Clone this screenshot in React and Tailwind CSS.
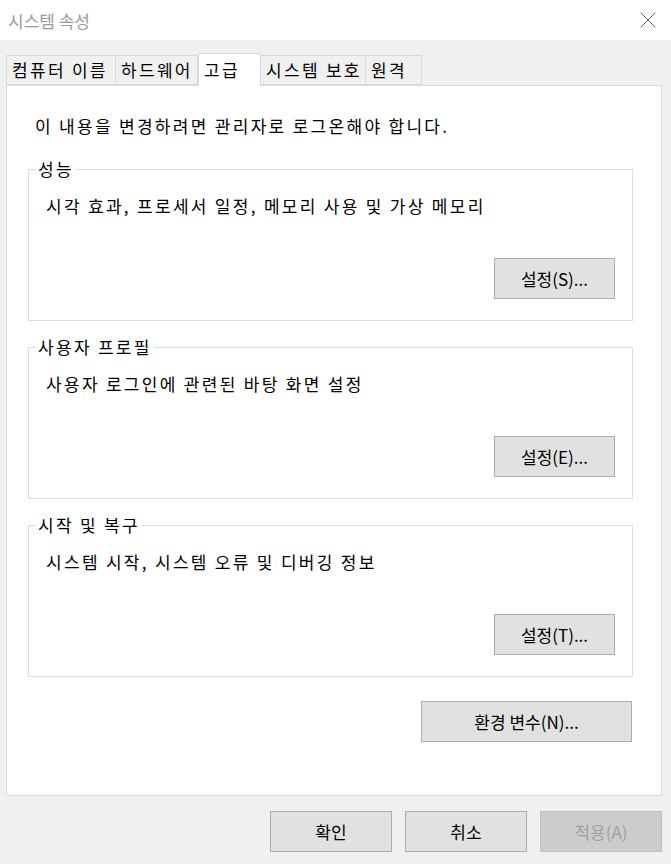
import React from 'react';

const font = { fontFamily: '"Noto Sans CJK KR", "Noto Sans", sans-serif' };

const tabs = [
  { label: '컴퓨터 이름', w: 'w-[110px]' },
  { label: '하드웨어', w: 'w-[83px]' },
  { label: '고급', w: 'w-[63px]', active: true },
  { label: '시스템 보호', w: 'w-[106px]' },
  { label: '원격', w: 'w-[57px]' },
];

const groups = [
  { title: '성능', desc: '시각 효과, 프로세서 일정, 메모리 사용 및 가상 메모리', btn: '설정(S)...' },
  { title: '사용자 프로필', desc: '사용자 로그인에 관련된 바탕 화면 설정', btn: '설정(E)...' },
  { title: '시작 및 복구', desc: '시스템 시작, 시스템 오류 및 디버깅 정보', btn: '설정(T)...' },
];

function Button({ children, className = '', disabled }) {
  return (
    <div
      className={
        'flex items-center justify-center h-[41px] border text-[17px] ' +
        (disabled
          ? 'bg-[#cccccc] border-[#bfbfbf] text-[#a0a0a0] '
          : 'bg-[#e1e1e1] border-[#adadad] text-black ') +
        className
      }
    >
      {children}
    </div>
  );
}

function GroupBox({ title, desc, btn }) {
  return (
    <div className="relative h-[152px] border border-[#dcdcdc] flex flex-col">
      {/* caption sits over the top border, like a legend */}
      <span className="absolute -top-[13px] left-[7px] bg-white px-[2px] leading-[24px] text-[17px] tracking-[2.3px] text-black">
        {title}
      </span>
      <p className="pl-[17px] pt-[24px] leading-[24px] text-[17px] tracking-[2.3px] text-black">{desc}</p>
      <Button className="w-[121px] self-end mt-auto mr-[17px] mb-[21px]">{btn}</Button>
    </div>
  );
}

export default function App() {
  return (
    <div className="w-[671px] h-[864px] bg-[#f0f0f0] flex flex-col" style={font}>
      {/* title bar */}
      <div className="h-[40px] bg-white flex items-center justify-between pl-[8px] pr-[15px]">
        <span className="text-[17px] text-[#9a9a9a] leading-none">시스템 속성</span>
        <svg width="16" height="16" viewBox="0 0 16 16">
          <path d="M0.5 0.5 L15.5 15.5 M15.5 0.5 L0.5 15.5" stroke="#5a5a5a" strokeWidth="1" fill="none" />
        </svg>
      </div>

      {/* tabs */}
      <div className="flex items-end mt-[13px] pl-[6px] h-[32px]">
        {tabs.map((t) =>
          t.active ? (
            <div
              key={t.label}
              className={t.w + ' h-[33px] -mb-px relative z-10 bg-white border border-b-0 border-[#d9d9d9] flex items-center pl-[5px] text-[17px] tracking-[2.3px] text-black'}
            >
              {t.label}
            </div>
          ) : (
            <div
              key={t.label}
              className={t.w + ' h-[30px] border border-[#d9d9d9] -ml-px first:ml-0 flex items-center pl-[5px] text-[17px] tracking-[2.3px] text-black bg-[#f0f0f0]'}
            >
              {t.label}
            </div>
          )
        )}
      </div>

      {/* panel */}
      <div className="ml-[6px] w-[656px] h-[711px] bg-white border border-[#d9d9d9] flex flex-col pl-[21px] pr-[28px]">
        <p className="pt-[28px] pl-[7px] leading-[24px] text-[17px] tracking-[2.3px] text-black">
          이 내용을 변경하려면 관리자로 로그온해야 합니다.
        </p>
        <div className="mt-[31px] flex flex-col gap-[26px]">
          {groups.map((g) => (
            <GroupBox key={g.title} {...g} />
          ))}
        </div>
        <Button className="w-[211px] self-end mt-[24px] mr-[1px]">환경 변수(N)...</Button>
      </div>

      {/* dialog buttons */}
      <div className="flex justify-end gap-[13px] mt-[15px] pr-[9px]">
        <Button className="w-[122px]">확인</Button>
        <Button className="w-[122px]">취소</Button>
        <Button className="w-[122px]" disabled>
          적용(A)
        </Button>
      </div>
    </div>
  );
}
